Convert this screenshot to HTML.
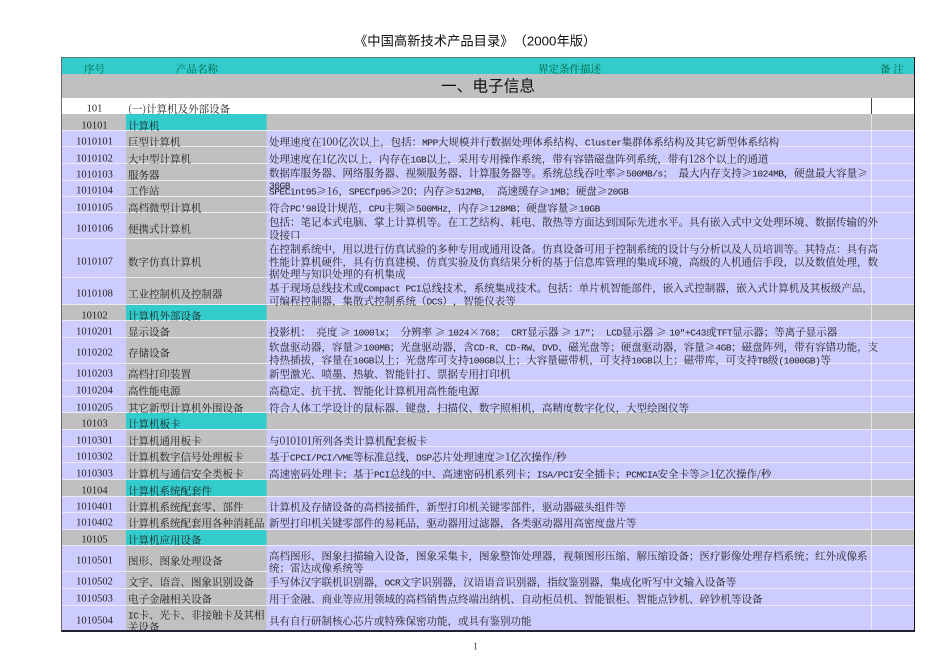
<!DOCTYPE html>
<html><head><meta charset="utf-8"><style>
html,body{margin:0;padding:0;background:#fff}
#p{position:relative;width:950px;height:672px;overflow:hidden;background:#fff;font:10.5px/12px "Noto Serif CJK SC","Liberation Serif",serif;color:#222;text-spacing-trim:space-all}
#p div{position:absolute}
.r{left:61px;width:853px}
.d{background:linear-gradient(90deg,#ccf 65px,#c0c0c0 65px,#c0c0c0 205px,#ccf 206px,#ccf 810px,#ecebfb 810px,#ecebfb 811px,#ccf 811px)}
.g{background:linear-gradient(90deg,#c0c0c0 65px,#3cc 65px,#3cc 205px,#c0c0c0 206px,#c0c0c0 810px,#e4e4e4 810px,#e4e4e4 811px,#c0c0c0 811px)}
.a,.b,.c{white-space:nowrap;height:12px}
.a{left:62px;width:65px;text-align:center;font-family:"Liberation Serif",serif}
.b{left:128px}
.c{left:269px}
u{text-decoration:none;font:9.5px/12px "Liberation Mono",monospace;letter-spacing:-.45px}
#t{filter:blur(.25px);transform:translateY(.5px)}
</style></head><body><div id="p">
<div style="left:61px;top:57px;width:853px;height:574px;background:#eaeaf8"></div>
<div style="left:61px;top:58px;width:853px;height:16px;background:#3cc"></div>
<div style="left:61px;top:74px;width:853px;height:24px;background:#c0c0c0"></div>
<div style="left:61px;top:98px;width:853px;height:16px;background:#fff"></div>
<div class="r g" style="top:114px;height:16px"></div>
<div class="r d" style="top:131px;height:15px"></div>
<div class="r d" style="top:147px;height:16px"></div>
<div class="r d" style="top:164px;height:16px"></div>
<div class="r d" style="top:181px;height:15px"></div>
<div class="r d" style="top:197px;height:15px"></div>
<div class="r d" style="top:213px;height:25px"></div>
<div class="r d" style="top:239px;height:38px"></div>
<div class="r d" style="top:278px;height:26px"></div>
<div class="r g" style="top:305px;height:15px"></div>
<div class="r d" style="top:321px;height:16px"></div>
<div class="r d" style="top:338px;height:25px"></div>
<div class="r d" style="top:364px;height:16px"></div>
<div class="r d" style="top:381px;height:15px"></div>
<div class="r d" style="top:397px;height:15px"></div>
<div class="r g" style="top:413px;height:16px"></div>
<div class="r d" style="top:430px;height:16px"></div>
<div class="r d" style="top:447px;height:15px"></div>
<div class="r d" style="top:463px;height:16px"></div>
<div class="r g" style="top:480px;height:16px"></div>
<div class="r d" style="top:497px;height:15px"></div>
<div class="r d" style="top:513px;height:16px"></div>
<div class="r g" style="top:530px;height:15px"></div>
<div class="r d" style="top:546px;height:25px"></div>
<div class="r d" style="top:572px;height:16px"></div>
<div class="r d" style="top:589px;height:16px"></div>
<div class="r d" style="top:606px;height:25px"></div>
<div style="left:61px;top:57px;width:853px;height:1px;background:#4f8488"></div>
<div style="left:61px;top:630px;width:854px;height:1.5px;background:#223"></div>
<div style="left:61px;top:57px;width:1px;height:574px;background:#667"></div>
<div style="left:913.5px;top:57px;width:1.5px;height:574px;background:#111"></div>
<div style="left:871px;top:98px;width:1px;height:16px;background:#444"></div>
<div id="t">
<div style="left:354px;top:32px;height:18px;white-space:nowrap;font:13.3px/18px 'Liberation Sans','Noto Sans CJK SC',sans-serif;color:#111">《中国高新技术产品目录》（2000年版）</div>
<div style="left:441px;top:75px;height:20px;white-space:nowrap;font:15.7px/20px 'Noto Sans CJK SC',sans-serif;color:#111">一、电子信息</div>
<div class="b" style="left:84px;top:63px;color:#064">序号</div>
<div class="b" style="left:176px;top:63px;color:#064">产品名称</div>
<div class="b" style="left:538px;top:63px;color:#064">界定条件描述</div>
<div class="b" style="left:880px;top:63px;color:#064">备 注</div>

<div class="a" style="top:103px">101</div><div class="b" style="top:103px">(一)计算机及外部设备</div>
<div class="a" style="top:120px">10101</div><div class="b" style="top:120px">计算机</div>
<div class="a" style="top:136px">1010101</div><div class="b" style="top:136px">巨型计算机</div><div class="c" style="top:136px">处理速度在100亿次以上，包括：<u>MPP</u>大规模并行数据处理体系结构、<u>Cluster</u>集群体系结构及其它新型体系结构</div>
<div class="a" style="top:153px">1010102</div><div class="b" style="top:153px">大中型计算机</div><div class="c" style="top:153px">处理速度在1亿次以上，内存在<u>1GB</u>以上，采用专用操作系统，带有容错磁盘阵列系统，带有128个以上的通道</div>
<div class="a" style="top:169px">1010103</div><div class="b" style="top:169px">服务器</div><div class="c" style="top:167px">数据库服务器、网络服务器、视频服务器、计算服务器等。系统总线吞吐率≥<u>500MB/s</u>；&nbsp; 最大内存支持≥<u>1024MB</u>，硬盘最大容量≥</div>
<div class="c" style="top:179px"><u>36GB</u></div>
<div class="a" style="top:185px">1010104</div><div class="b" style="top:185px">工作站</div><div class="c" style="top:185px"><u>SPECint95</u>≥16，<u>SPECfp95</u>≥20；内存≥<u>512MB</u>，&nbsp; 高速缓存≥<u>1MB</u>；硬盘≥<u>20GB</u></div>
<div class="a" style="top:202px">1010105</div><div class="b" style="top:202px">高档微型计算机</div><div class="c" style="top:202px">符合<u>PC'98</u>设计规范，<u>CPU</u>主频≥<u>500MHz</u>，内存≥<u>128MB</u>；硬盘容量≥<u>10GB</u></div>
<div class="a" style="top:223px">1010106</div><div class="b" style="top:223px">便携式计算机</div><div class="c" style="top:216px">包括：笔记本式电脑、掌上计算机等。在工艺结构、耗电、散热等方面达到国际先进水平。具有嵌入式中文处理环境、数据传输的外</div>
<div class="c" style="top:229px">设接口</div>
<div class="a" style="top:256px">1010107</div><div class="b" style="top:256px">数字仿真计算机</div><div class="c" style="top:243px">在控制系统中，用以进行仿真试验的多种专用或通用设备。仿真设备可用于控制系统的设计与分析以及人员培训等。其特点：具有高</div>
<div class="c" style="top:256px">性能计算机硬件，具有仿真建模、仿真实验及仿真结果分析的基于信息库管理的集成环境，高级的人机通信手段，以及数值处理，数</div>
<div class="c" style="top:268px">据处理与知识处理的有机集成</div>
<div class="a" style="top:288px">1010108</div><div class="b" style="top:288px">工业控制机及控制器</div><div class="c" style="top:282px">基于现场总线技术或<u>Compact PCI</u>总线技术，系统集成技术。包括：单片机智能部件，嵌入式控制器，嵌入式计算机及其板级产品，</div>
<div class="c" style="top:295px">可编程控制器，集散式控制系统（<u>DCS</u>），智能仪表等</div>
<div class="a" style="top:310px">10102</div><div class="b" style="top:310px">计算机外部设备</div>
<div class="a" style="top:326px">1010201</div><div class="b" style="top:326px">显示设备</div><div class="c" style="top:326px">投影机：&nbsp; 亮度 ≥ <u>1000lx</u>；&nbsp; 分辨率 ≥ <u>1024</u>×<u>768</u>；&nbsp; <u>CRT</u>显示器 ≥ <u>17"</u>；&nbsp; <u>LCD</u>显示器 ≥ <u>10"+C43</u>或<u>TFT</u>显示器；等离子显示器</div>
<div class="a" style="top:347px">1010202</div><div class="b" style="top:347px">存储设备</div><div class="c" style="top:341px">软盘驱动器，容量≥<u>100MB</u>；光盘驱动器，含<u>CD-R</u>、<u>CD-RW</u>、<u>DVD</u>、磁光盘等；硬盘驱动器，容量≥<u>4GB</u>；磁盘阵列，带有容错功能，支</div>
<div class="c" style="top:354px">持热插拔，容量在<u>10GB</u>以上；光盘库可支持<u>100GB</u>以上；大容量磁带机，可支持<u>10GB</u>以上；磁带库，可支持<u>TB</u>级<u>(1000GB)</u>等</div>
<div class="a" style="top:368px">1010203</div><div class="b" style="top:368px">高档打印装置</div><div class="c" style="top:368px">新型激光、喷墨、热敏、智能针打、票据专用打印机</div>
<div class="a" style="top:385px">1010204</div><div class="b" style="top:385px">高性能电源</div><div class="c" style="top:385px">高稳定、抗干扰、智能化计算机用高性能电源</div>
<div class="a" style="top:402px">1010205</div><div class="b" style="top:402px">其它新型计算机外围设备</div><div class="c" style="top:402px">符合人体工学设计的鼠标器、键盘，扫描仪、数字照相机，高精度数字化仪，大型绘图仪等</div>
<div class="a" style="top:418px">10103</div><div class="b" style="top:418px">计算机板卡</div>
<div class="a" style="top:435px">1010301</div><div class="b" style="top:435px">计算机通用板卡</div><div class="c" style="top:435px">与010101所列各类计算机配套板卡</div>
<div class="a" style="top:451px">1010302</div><div class="b" style="top:451px">计算机数字信号处理板卡</div><div class="c" style="top:451px">基于<u>CPCI/PCI/VME</u>等标准总线，<u>DSP</u>芯片处理速度≥1亿次操作/秒</div>
<div class="a" style="top:468px">1010303</div><div class="b" style="top:468px">计算机与通信安全类板卡</div><div class="c" style="top:468px">高速密码处理卡；基于<u>PCI</u>总线的中、高速密码机系列卡；<u>ISA/PCI</u>安全插卡；<u>PCMCIA</u>安全卡等≥1亿次操作/秒</div>
<div class="a" style="top:485px">10104</div><div class="b" style="top:485px">计算机系统配套件</div>
<div class="a" style="top:501px">1010401</div><div class="b" style="top:501px">计算机系统配套零、部件</div><div class="c" style="top:501px">计算机及存储设备的高档接插件，新型打印机关键零部件，驱动器磁头组件等</div>
<div class="a" style="top:517px">1010402</div><div class="b" style="top:517px">计算机系统配套用各种消耗品</div><div class="c" style="top:517px">新型打印机关键零部件的易耗品，驱动器用过滤器，各类驱动器用高密度盘片等</div>
<div class="a" style="top:534px">10105</div><div class="b" style="top:534px">计算机应用设备</div>
<div class="a" style="top:555px">1010501</div><div class="b" style="top:555px">图形、图象处理设备</div><div class="c" style="top:550px">高档图形、图象扫描输入设备，图象采集卡，图象整饰处理器，视频图形压缩、解压缩设备；医疗影像处理存档系统；红外成像系</div>
<div class="c" style="top:562px">统；雷达成像系统等</div>
<div class="a" style="top:576px">1010502</div><div class="b" style="top:576px">文字、语音、图象识别设备</div><div class="c" style="top:576px">手写体汉字联机识别器，<u>OCR</u>文字识别器，汉语语音识别器，指纹鉴别器，集成化听写中文输入设备等</div>
<div class="a" style="top:593px">1010503</div><div class="b" style="top:593px">电子金融相关设备</div><div class="c" style="top:593px">用于金融、商业等应用领域的高档销售点终端出纳机、自动柜员机、智能银柜、智能点钞机、碎钞机等设备</div>
<div class="a" style="top:615px">1010504</div><div class="b" style="top:609px"><u>IC</u>卡、光卡、非接触卡及其相</div><div class="b" style="top:621px">关设备</div><div class="c" style="top:615px">具有自行研制核心芯片或特殊保密功能，或具有鉴别功能</div>
<div style="left:473px;top:641px;height:12px;font:10px/12px 'Liberation Serif',serif;color:#444">1</div>
</div>
</div></body></html>
